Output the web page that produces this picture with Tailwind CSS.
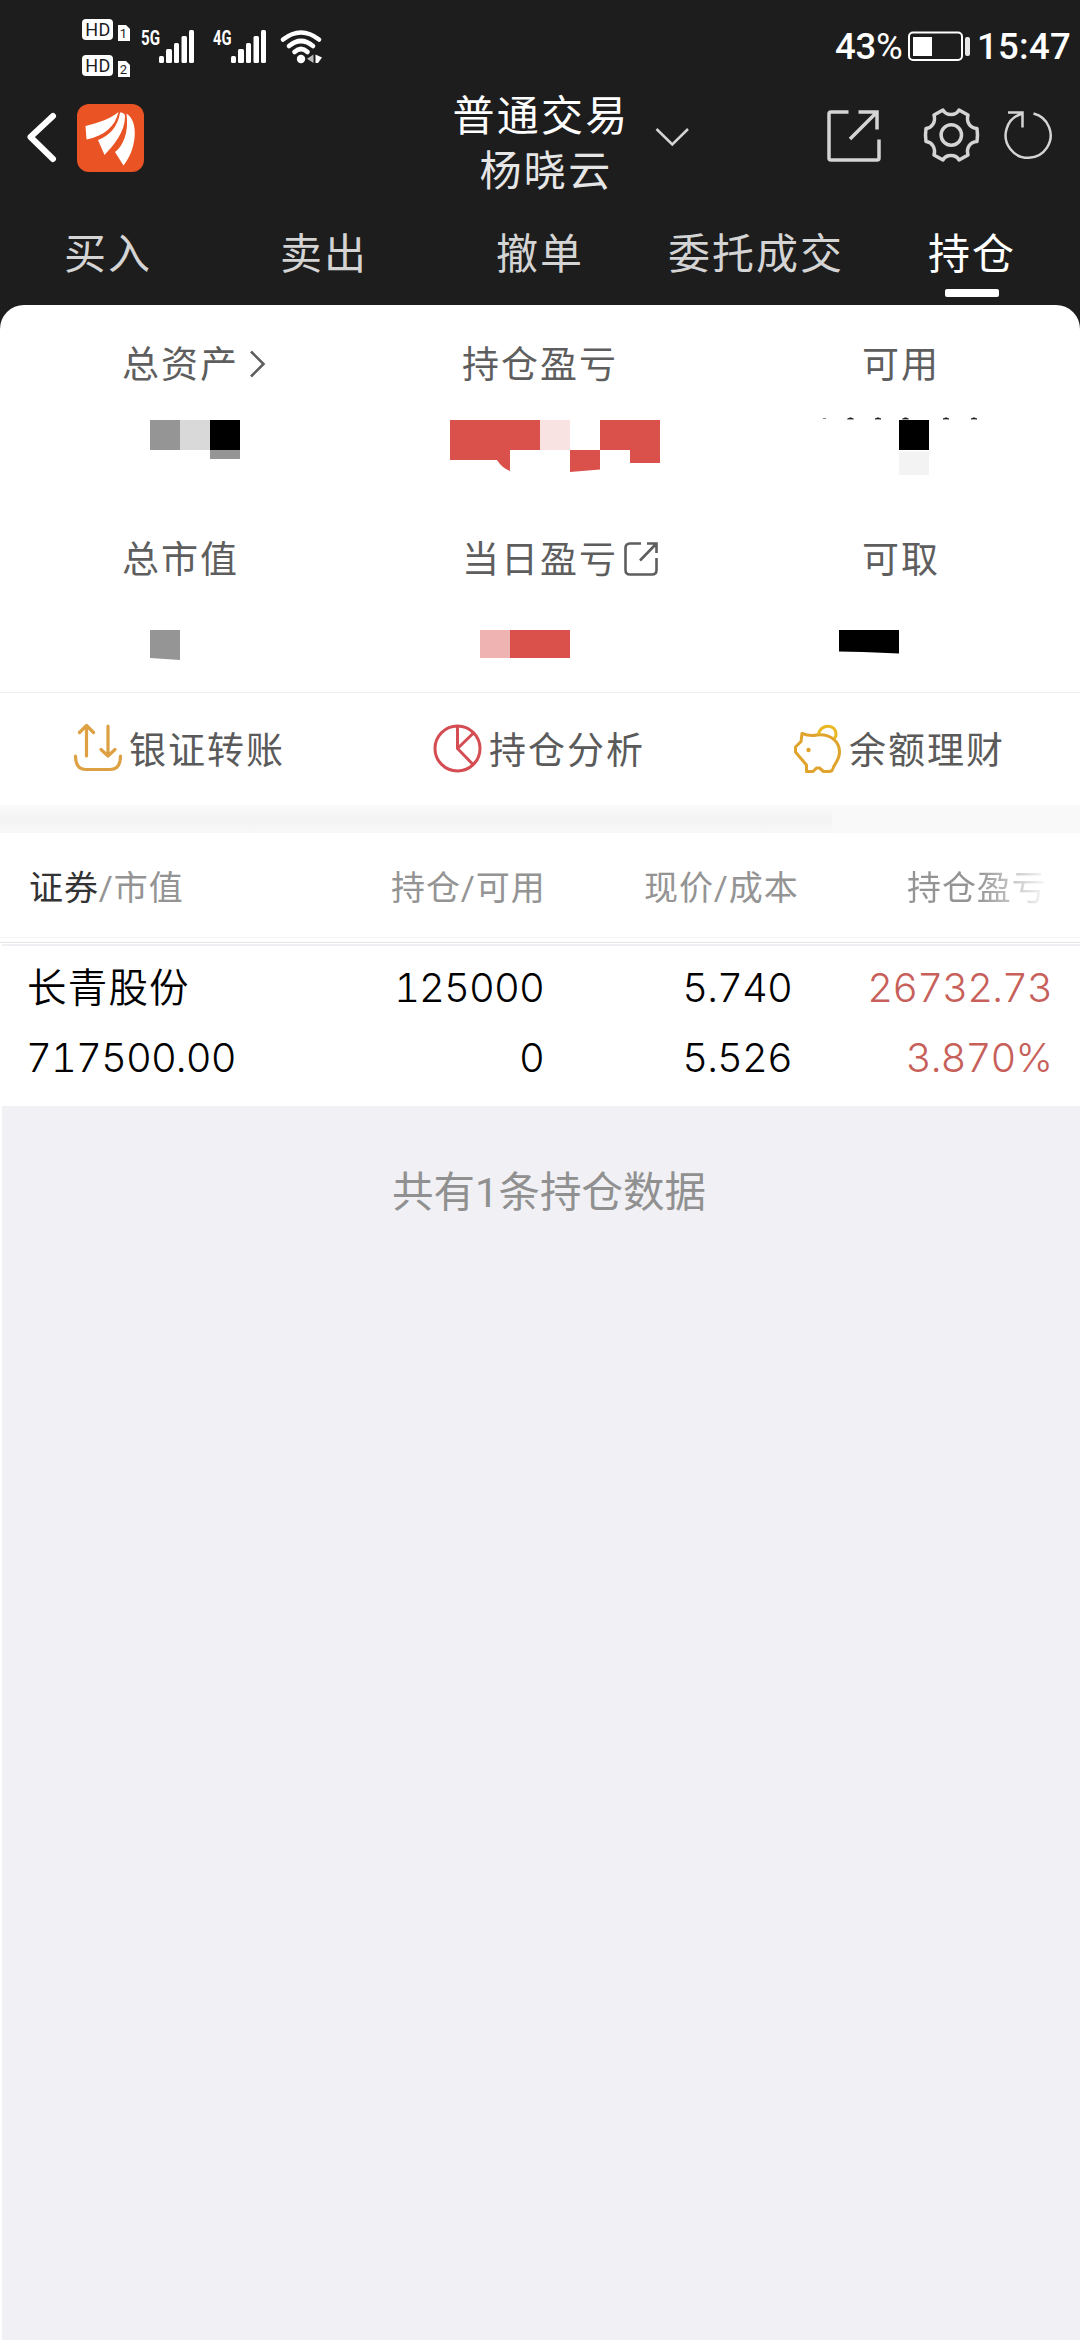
<!DOCTYPE html>
<html lang="zh-CN">
<head>
<meta charset="utf-8">
<title>持仓</title>
<script src="https://cdn.jsdelivr.net/npm/@tailwindcss/browser@4"></script>
</head>
<body class="w-[1080px] h-[2340px] overflow-hidden bg-[#1d1d1d] flex flex-col font-['Roboto','Noto_Sans_CJK_SC',sans-serif]">

<!-- Status bar -->
<header class="h-[90px] shrink-0 flex text-white">
  <svg class="w-[330px] h-[90px] shrink-0" viewBox="0 0 330 90" fill="#fff">
    <rect x="82" y="19" width="31" height="21" rx="4"/>
    <rect x="82" y="55" width="31" height="21" rx="4"/>
    <path d="M118 25h8l4 4v12h-12zM118 61h8l4 4v12h-12z"/>
    <g fill="#1d1d1d" font-family="Roboto" text-anchor="middle">
      <text x="97.700" y="36" font-size="18" textLength="25">HD</text>
      <text x="97.700" y="72" font-size="18" textLength="25">HD</text>
      <text x="123.500" y="38" font-size="13">1</text>
      <text x="123.500" y="74" font-size="13">2</text>
    </g>
    <g font-family="Roboto" font-weight="700" font-size="20.500">
      <text x="141" y="44.500" textLength="19" lengthAdjust="spacingAndGlyphs">5G</text>
      <text x="213" y="44.500" textLength="18.500" lengthAdjust="spacingAndGlyphs">4G</text>
    </g>
    <g id="bars">
      <rect x="159" y="56" width="5" height="7" rx="1.500"/><rect x="166" y="49" width="6" height="14" rx="1.500"/><rect x="174" y="43" width="5" height="20" rx="1.500"/><rect x="181.500" y="36" width="5.500" height="27" rx="1.500"/><rect x="189" y="30" width="5" height="33" rx="1.500"/>
    </g>
    <use href="#bars" x="72"/>
    <g fill="none" stroke="#fff" stroke-width="4.600" stroke-linecap="round">
      <path d="M283 39.500Q301 25.500 319 39.500"/><path d="M289 46Q301 36 313 46"/><path d="M294.500 52Q301 46 307.500 52"/>
    </g>
    <circle cx="301" cy="59" r="4.200"/>
    <path d="M313.500 54.500v8.500l-6.500-4.200z" fill="#bbb"/><path d="M315.500 54.500l6.500 3-4 5.500h-2.500z"/>
  </svg>
  <div class="flex-1 flex items-center pl-[505px] pt-[4px] text-[36.500px] font-medium leading-none">
    <span class="w-[73px] tracking-[-0.200px] shrink-0 whitespace-nowrap">43<span class="font-normal">%</span></span>
    <svg class="w-[64px] h-[32px] -mt-px shrink-0" viewBox="0 0 64 32"><rect x="1" y="1.500" width="53" height="27.500" rx="4" fill="none" stroke="#fff" stroke-width="2"/><rect x="5" y="6" width="19" height="19" fill="#fff"/><rect x="57" y="6" width="5" height="19" rx="2" fill="#e6e6e6"/></svg>
    <span class="ml-[5px] tracking-[0.300px]">15:47</span>
  </div>
</header>

<!-- Navigation -->
<nav class="h-[116px] shrink-0 flex">
  <svg class="w-[150px] h-[116px] shrink-0" viewBox="0 90 150 116">
    <path d="M53 116L30.500 137 53 159" fill="none" stroke="#fff" stroke-width="6" stroke-linecap="round" stroke-linejoin="round"/>
    <rect x="77" y="104" width="67" height="68" rx="12" fill="#ea5324"/>
    <g fill="#fff"><path d="M85.500 126C98 123 110 119 118.500 112C115 127 104 136 86.500 139.500z"/><path d="M120 112.500c3 0 5 1 5 4C125 132 114 145 104.500 155L98 140C109 136 118 127 120 112.500z"/><path d="M126.500 113.500C139 121 137 149 123.500 165.500L115 152C123 146 129 133 126.500 113.500z"/></g>
  </svg>
  <div class="w-[507px] pl-[281px] shrink-0">
    <div class="w-[240px] -ml-[11px] h-[110px] flex flex-col items-center justify-center text-[42px] leading-[55px] tracking-[2.300px] pl-[2px]">
      <span class="text-white -translate-y-[1px]">普通交易</span>
      <span class="text-[#e6e6e6] pl-[10px] whitespace-nowrap -translate-y-[1px]">杨晓云</span>
    </div>
  </div>
  <svg class="w-[423px] h-[116px] shrink-0" viewBox="657 90 423 116" overflow="visible" fill="none" stroke="#d4d4d4">
    <path d="M656.500 129L672.300 144.500 688 129" stroke-width="2.500"/>
    <path d="M848.500 112H831q-2 0-2 2v44q0 2 2 2h46q2 0 2-2v-18.500M858.500 112H877v17.500M877 112L850 139" stroke-width="3.500"/>
    <path d="M943 110C946 116 956 116 959 110L968 115C966 122 970 128 977 128.500Q978 135 977 141.500C970 142 966 148 968 155L959 160C956 154 946 154 943 160L934 155C936 148 932 142 926 141.500Q925 135 926 128.500C932 128 936 122 934 115z" stroke-width="3.500" stroke-linejoin="round"/>
    <circle cx="951.300" cy="135" r="10.200" stroke-width="3.500"/>
    <path d="M1033.500 113.500A22.500 22.500 0 1 1 1021 114L1023 113M1008 112.500h14.500v15" stroke-width="2.500"/>
  </svg>
</nav>

<!-- Tabs -->
<div class="h-[99px] shrink-0 grid grid-cols-5 text-[42px] leading-[98px] tracking-[2px] text-[#d4d4d4] text-center">
  <span>买入</span><span>卖出</span><span>撤单</span><span>委托成交</span>
  <span class="relative text-white">持仓<i class="absolute left-[81px] top-[83px] w-[54px] h-[8px] rounded-[2px] bg-white"></i></span>
</div>

<main class="flex-1 flex flex-col bg-white rounded-t-[24px] overflow-hidden">
  <!-- Account summary -->
  <section class="h-[387px] shrink-0 grid grid-cols-[450px_389px_241px] grid-rows-[198px_189px] text-[37px] tracking-[2px] text-[#5e5e5e]">
    <div class="pt-[35px]">
      <div class="pl-[122px] h-[52px] flex items-center">总资产<svg class="ml-[8px] -mt-[4px] w-[20px] h-[30px]" viewBox="0 0 20 30" fill="none" stroke="#5e5e5e" stroke-width="2.600"><path d="M4 2.500L16.500 15 4 27.500"/></svg></div>
      <svg class="mt-[28px] w-full h-[60px]" viewBox="0 420 450 60"><path d="M150 420h30v30h-30zM210 450h30v9h-30z" fill="#959595"/><path d="M180 420h30v30h-30z" fill="#d9d9d9"/><path d="M210 420h30v30h-30z"/></svg>
    </div>
    <div class="pt-[35px]">
      <div class="pl-[12px] h-[52px] flex items-center">持仓盈亏</div>
      <svg class="mt-[28px] w-full h-[60px]" viewBox="450 420 389 60"><path d="M450 420h90v30h-30v21q-8-3-13-11h-47zM570 450h30v19.500l-30 2.500zM600 420h60v43h-30v-13h-30z" fill="#da504b"/><path d="M540 420h30v30h-30z" fill="#f8e3e2"/></svg>
    </div>
    <div class="pt-[35px]">
      <div class="pl-[23px] h-[52px] flex items-center">可用</div>
      <svg class="mt-[22px] w-full h-[66px]" viewBox="839 414 241 66" overflow="visible"><path d="M899 420h30v30h-30z"/><path d="M899 451.500h30v23.500h-30z" fill="#f3f3f3"/><path d="M847.500 419q3-2.500 6 0zM875 419q3-2.500 6 0zM902.500 419q3-2.500 6 0zM943 419q3-2.500 6 0zM971 419q3-2.500 6 0z" stroke="#333" stroke-width="0.800"/><path d="M823 418.500h3" stroke="#888"/></svg>
    </div>
    <div class="pt-[32px]">
      <div class="pl-[122px] h-[52px] flex items-center">总市值</div>
      <svg class="mt-[43px] w-full h-[40px]" viewBox="0 630 450 40"><path d="M150 630h30v30l-30-2z" fill="#959595"/></svg>
    </div>
    <div class="pt-[32px]">
      <div class="pl-[12px] h-[52px] flex items-center">当日盈亏<svg class="ml-[5px] -mt-[4px] w-[36px] h-[36px]" viewBox="0 0 36 36" fill="none" stroke="#5e5e5e" stroke-width="2.600"><path d="M18 2.500H7q-4.500 0-4.500 4.500v22q0 4.500 4.500 4.500h22q4.500 0 4.500-4.500V17M24 2.500h9.500V12M33.500 2.500L17 19.500"/></svg></div>
      <svg class="mt-[43px] w-full h-[40px]" viewBox="450 630 389 40"><path d="M480 630h30v28h-30z" fill="#efb3b1"/><path d="M510 630h60v28h-60z" fill="#da504b"/></svg>
    </div>
    <div class="pt-[32px]">
      <div class="pl-[23px] h-[52px] flex items-center">可取</div>
      <svg class="mt-[43px] w-full h-[40px]" viewBox="839 630 241 40"><path d="M839 630h60v23.500l-36-1.500-24-0.500z"/></svg>
    </div>
  </section>

  <!-- Shortcuts -->
  <section class="h-[113px] shrink-0 border-t border-[#ededed] pb-[3px] grid grid-cols-3 text-[37px] tracking-[2px] text-[#5a5a5a]">
    <div class="pl-[72px] flex items-center">
      <svg class="w-[52px] h-[52px] mr-[5px]" viewBox="0 0 52 52" fill="none" stroke="#dda143" stroke-width="3.200" stroke-linecap="round" stroke-linejoin="round"><path d="M14.500 34V4M7.500 10.500l7-7 7 7M36 4v30M29 27.500l7 6.500 7-6.500M3.500 34c0 9 3.500 13.500 10.500 13.500h24c7 0 10.500-4.500 10.500-13.500"/></svg><span class="mt-[8px]">银证转账</span></div>
    <div class="pl-[72px] flex items-center">
      <svg class="w-[52px] h-[52px] mr-[5px]" viewBox="0 0 52 52" fill="none" stroke="#d44d52" stroke-width="3"><circle cx="25.500" cy="26.500" r="22.500"/><path d="M25.500 4v22.500L41.500 43M25.500 26.500L41.500 11"/></svg><span class="mt-[8px]">持仓分析</span></div>
    <div class="pl-[72px] flex items-center">
      <svg class="w-[52px] h-[52px] mr-[5px]" viewBox="0 0 52 52" fill="none" stroke="#e0a32c" stroke-width="3" stroke-linejoin="round"><path d="M10 11.500q8 3 15 1.500C39 11.500 47.500 20 47.500 30c0 7-4 11-6 15-1 4-2 4.500-5 4.500h-5l-4-3.500h-3l-3.500 3.500H14.500v-6.500L8.500 36l-5-6v-5l5.500-5.500z"/><path d="M26.500 12.500C28 1.500 45 1 44 13.500l-1.500 3" stroke="#e9b822"/><circle cx="16.500" cy="28" r="2.200" fill="#e0a32c" stroke="none"/></svg><span class="mt-[8px]">余额理财</span></div>
  </section>

  <div class="h-[28px] shrink-0 flex"><div class="w-[832px] bg-linear-to-b from-[#fafafa] via-[#f4f4f4] to-[#f8f8f8]"></div><div class="flex-1 bg-[#f9f9f9]"></div></div>

  <!-- Holdings header -->
  <section class="h-[105px] shrink-0 pt-[6px] grid grid-cols-[364px_252px_264px_200px] text-[34px] tracking-[0.900px] leading-[98px] text-[#949494] border-b border-[#f5f5f5]">
    <span class="pl-[29px]"><span class="text-[#333]">证券</span>/市值</span>
    <span class="pl-[27px]">持仓/可用</span>
    <span class="pl-[28px]">现价/成本</span>
    <span class="pl-[27px]"><span class="bg-linear-to-r from-[#949494] from-50% to-[#fafafa] to-100% bg-clip-text text-transparent">持仓盈亏</span></span>
  </section>
  <div class="h-[8px] shrink-0 pt-[4px]"><div class="h-px bg-[#e4e4e6]"></div><div class="h-[2px] mt-px ml-[2px] bg-[#efeff4]"></div></div>

  <!-- Holding -->
  <section class="h-[160px] shrink-0 pt-[7px] grid grid-cols-[364px_180px_248px_260px] grid-rows-[70px_70px] font-['Inter','Noto_Sans_CJK_SC',sans-serif] tabular-nums text-[40px] leading-[70px] tracking-[-0.900px] font-[350] text-black text-right">
    <span class="pl-[27px] text-left text-[39.500px] tracking-[1.200px]">长青股份</span><span>125000</span><span>5.740</span><span class="text-[#c75f5a]">26732.73</span>
    <span class="pl-[26px] text-left">717500.00</span><span>0</span><span>5.526</span><span class="text-[#c75f5a]">3.870%</span>
  </section>

  <footer class="flex-1 ml-[2px] bg-[#f0f0f5] pt-[57px] pl-[16px] text-center text-[41.500px] leading-[60px] text-[#909090]">共有1条持仓数据</footer>
</main>
</body>
</html>
